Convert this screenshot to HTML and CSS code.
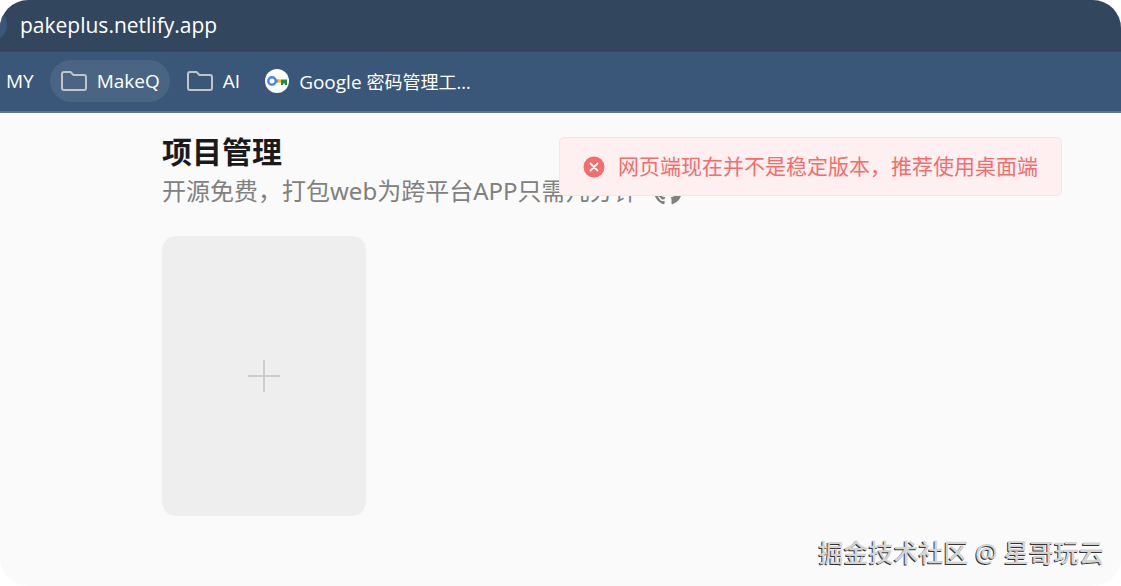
FILE: index.html
```html
<!DOCTYPE html>
<html lang="zh-CN">
<head>
    <meta charset="UTF-8">
    <meta name="viewport" content="width=device-width, initial-scale=1.0">
    <title>PakePlus</title>
    <link rel="stylesheet" href="styles.css">
</head>
<body>
    <div class="window">
        <!-- Browser bars -->
        <header>
            <div class="address-bar">
                <span class="address">pakeplus.netlify.app</span>
            </div>
            <nav class="bookmarks">
                <a class="bookmark" href="#">MY</a>
                <a class="bookmark active" href="#">
                    <svg class="folder" viewBox="0 0 26 20" aria-hidden="true">
                        <path d="M3 1h6.5l3 3H23a2 2 0 0 1 2 2v11a2 2 0 0 1-2 2H3a2 2 0 0 1-2-2V3a2 2 0 0 1 2-2z"/>
                    </svg>
                    MakeQ
                </a>
                <a class="bookmark" href="#">
                    <svg class="folder" viewBox="0 0 26 20" aria-hidden="true">
                        <path d="M3 1h6.5l3 3H23a2 2 0 0 1 2 2v11a2 2 0 0 1-2 2H3a2 2 0 0 1-2-2V3a2 2 0 0 1 2-2z"/>
                    </svg>
                    AI
                </a>
                <a class="bookmark" href="#">
                    <svg class="key" viewBox="0 0 24 24" aria-hidden="true">
                        <circle cx="12" cy="12" r="12" fill="#fff"/>
                        <path d="M10 10.5h3.5v3H10z" fill="#ea4335"/>
                        <path d="M12.5 10.5h4v3h-4z" fill="#fbbc04"/>
                        <path d="M16 10.5h6V16h-2.2v-1.5h-1.6V16H16z" fill="#1e8e3e"/>
                        <circle cx="7" cy="12" r="3.7" fill="none" stroke="#4285f4" stroke-width="2.4"/>
                    </svg>
                    <span>Google <span class="cjk">密码管理工...</span></span>
                </a>
            </nav>
        </header>

        <!-- Project list -->
        <main>
            <h1>项目管理</h1>
            <div class="subtitle">
                <span>开源免费，打包web为跨平台APP只需几分钟</span>
                <a class="github" href="#" aria-label="GitHub">
                    <svg viewBox="0 0 16 16" aria-hidden="true">
                        <path d="M8 0C3.58 0 0 3.58 0 8c0 3.54 2.29 6.53 5.47 7.59.4.07.55-.17.55-.38 0-.19-.01-.82-.01-1.49-2.01.37-2.53-.49-2.69-.94-.09-.23-.48-.94-.82-1.13-.28-.15-.68-.52-.01-.53.63-.01 1.08.58 1.23.82.72 1.21 1.87.87 2.33.66.07-.52.28-.87.51-1.07-1.78-.2-3.64-.89-3.64-3.95 0-.87.31-1.59.82-2.15-.08-.2-.36-1.02.08-2.12 0 0 .67-.21 2.2.82.64-.18 1.32-.27 2-.27s1.36.09 2 .27c1.53-1.04 2.2-.82 2.2-.82.44 1.1.16 1.92.08 2.12.51.56.82 1.27.82 2.15 0 3.07-1.87 3.75-3.65 3.95.29.25.54.73.54 1.48 0 1.07-.01 1.93-.01 2.2 0 .21.15.46.55.38A8.01 8.01 0 0 0 16 8c0-4.42-3.58-8-8-8z"/>
                    </svg>
                </a>
            </div>
            <button class="add-project" type="button" aria-label="新建项目">
                <svg viewBox="0 0 32 32" aria-hidden="true">
                    <path d="M16 0v32M0 16h32"/>
                </svg>
            </button>
        </main>

        <!-- Error message -->
        <div class="message" role="alert">
            <svg viewBox="0 0 22 22" aria-hidden="true">
                <circle cx="11" cy="11" r="10.5" fill="#f56c6c"/>
                <path d="M7.5 7.5l7 7M14.5 7.5l-7 7" stroke="#fff" stroke-width="1.8" stroke-linecap="round"/>
            </svg>
            <span>网页端现在并不是稳定版本，推荐使用桌面端</span>
        </div>

        <div class="watermark">掘金技术社区 @ 星哥玩云</div>
    </div>
</body>
</html>
```
FILE: styles.css
```css
* {
    box-sizing: border-box;
}

body {
    margin: 0;
    background-color: #fff;
    font-family: "Noto Sans", "Noto Sans CJK SC", sans-serif;
}

.window {
    position: relative;
    min-height: 100vh;
    overflow: hidden;
    border-radius: 28px;
    background-color: #fafafa;
}

.address-bar {
    position: relative;
    display: flex;
    align-items: center;
    height: 51px;
    padding: 0 20px 2px;
    background-color: #32475e;
    color: #fff;
    font-family: "Open Sans", sans-serif;
    font-size: 21px;
    font-weight: 500;
}

/* end of the round button that sits left of the address */
.address-bar::before {
    content: "";
    position: absolute;
    left: -25px;
    top: 9px;
    width: 32px;
    height: 32px;
    border-radius: 50%;
    background-color: #3a5779;
}

.bookmarks {
    display: flex;
    align-items: center;
    height: 62px;
    padding-bottom: 1px;
    border-top: 1px solid #2f4c6b;
    border-bottom: 2px solid #5b7893;
    background-color: #3a5779;
}

.bookmark {
    display: flex;
    align-items: center;
    gap: 10px;
    height: 42px;
    padding: 0 10px 0 11px;
    border-radius: 21px;
    color: #fff;
    font-family: "Open Sans", "Noto Sans CJK SC", sans-serif;
    font-size: 19px;
    text-decoration: none;
    white-space: nowrap;
}

.bookmark:first-child {
    padding: 0 16px 0 6px;
}

.bookmark + .bookmark + .bookmark {
    padding: 0 8px 0 17px;
}

.bookmark .cjk {
    font-size: 18px;
}

.active {
    background-color: #4a6583;
}

.folder {
    width: 26px;
    height: 20px;
    fill: none;
    stroke: #c3c4c6;
    stroke-width: 2;
}

.key {
    width: 24px;
    height: 24px;
}

main {
    padding: 18px 162px 70px;
}

h1 {
    margin: 0;
    color: #1a1a1a;
    font-family: "Noto Sans CJK SC", sans-serif;
    font-size: 30px;
    line-height: 38px;
}

.subtitle {
    display: flex;
    align-items: center;
    gap: 16px;
    padding-top: 4px;
    color: #808080;
    font-size: 24px;
    line-height: 36px;
    white-space: nowrap;
}

.github {
    display: flex;
    color: #808080;
}

.github svg {
    width: 28px;
    height: 28px;
    fill: currentColor;
}

.add-project {
    display: flex;
    align-items: center;
    justify-content: center;
    width: 204px;
    height: 280px;
    margin-top: 27px;
    padding: 0;
    border: none;
    border-radius: 14px;
    background-color: #eee;
}

.add-project svg {
    width: 32px;
    height: 32px;
    stroke: #ccc;
    stroke-width: 2;
}

.message {
    position: absolute;
    top: 137px;
    right: 59px;
    display: flex;
    align-items: center;
    gap: 13px;
    height: 59px;
    padding: 0 23px;
    border: 1px solid #fde2e2;
    border-radius: 5px;
    background-color: #fef0f0;
    color: #f56c6c;
    font-size: 21px;
    line-height: 28px;
    white-space: nowrap;
}

.message span {
    padding-bottom: 2px;
}

.message svg {
    width: 22px;
    height: 22px;
}

.watermark {
    position: absolute;
    right: 17px;
    bottom: 16px;
    color: #d4d4d4;
    font-size: 25px;
    font-weight: 500;
    line-height: 36px;
    text-shadow: -1px 1px 0 #333;
}
```
